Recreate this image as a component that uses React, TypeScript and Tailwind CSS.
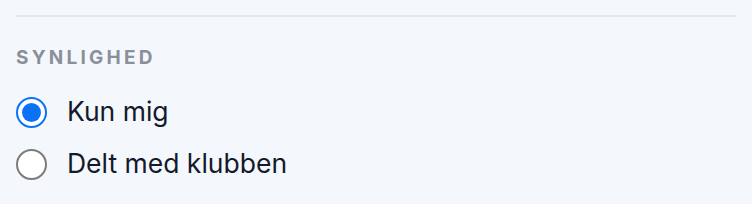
import React, { useState } from "react";

const options = [
  { id: "private", label: "Kun mig" },
  { id: "club", label: "Delt med klubben" },
];

export default function App() {
  const [value, setValue] = useState("private");

  return (
    <div className="min-h-screen bg-[#f4f7fb] px-4 pt-[15px] font-['Inter',sans-serif]">
      <div className="h-[2px] bg-[#e3e8ee]" />

      <div className="mt-[29px] text-[19px] leading-[24px] font-bold uppercase tracking-[0.17em] text-[#8a909b]">
        Synlighed
      </div>

      <div className="mt-4 flex flex-col">
        {options.map((opt) => {
          const checked = value === opt.id;
          return (
            <label
              key={opt.id}
              className="flex h-[52px] cursor-pointer items-center gap-5"
              onClick={() => setValue(opt.id)}
            >
              {checked ? (
                <span className="flex h-[31px] w-[31px] items-center justify-center rounded-full border-2 border-[#0a72f5] bg-white">
                  <span className="h-[19px] w-[19px] rounded-full bg-[#0a72f5]" />
                </span>
              ) : (
                <span className="h-[31px] w-[31px] rounded-full border-2 border-[#7b7b7b] bg-white" />
              )}
              <span className="text-[26.5px] text-[#131a2c]">{opt.label}</span>
            </label>
          );
        })}
      </div>
    </div>
  );
}
